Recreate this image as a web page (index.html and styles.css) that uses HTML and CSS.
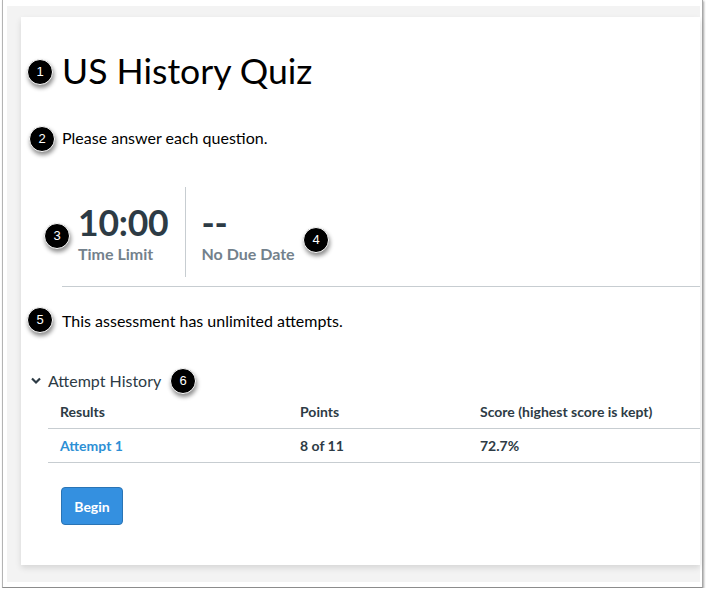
FILE: index.html
```html
<!DOCTYPE html>
<html>
<head>
<meta charset="utf-8">
<link rel="stylesheet" href="styles.css">
</head>
<body>
<div class="frame">
  <div class="page">
    <div class="card">
      <h1 class="title">US History Quiz</h1>
      <p class="desc">Please answer each question.</p>
      <div class="stats">
        <div class="stat first">
          <div class="stat-value">10:00</div>
          <div class="stat-label">Time Limit</div>
        </div>
        <div class="stat second">
          <div class="stat-value dash">--</div>
          <div class="stat-label">No Due Date</div>
        </div>
      </div>
      <p class="attempts">This assessment has unlimited attempts.</p>
      <div class="history">
        <div class="history-toggle">
          <svg class="chev" width="10" height="8" viewBox="0 0 10 8"><path d="M1 1.5 L5 5.5 L9 1.5" fill="none" stroke="#2d3b45" stroke-width="2.2"/></svg>
          <span>Attempt History</span>
        </div>
        <div class="table">
          <div class="row head">
            <div class="c1">Results</div>
            <div class="c2">Points</div>
            <div class="c3">Score (highest score is kept)</div>
          </div>
          <div class="row">
            <div class="c1"><a class="link">Attempt 1</a></div>
            <div class="c2">8 of 11</div>
            <div class="c3">72.7%</div>
          </div>
        </div>
      </div>
      <button class="begin">Begin</button>

      <span class="badge b1">1</span>
      <span class="badge b2">2</span>
      <span class="badge b3">3</span>
      <span class="badge b4">4</span>
      <span class="badge b5">5</span>
      <span class="badge b6">6</span>
    </div>
  </div>
</div>
</body>
</html>
```
FILE: styles.css
```css
* { box-sizing: border-box; }
html, body { margin: 0; padding: 0; background: #fff; }
body { font-family: Lato, "Open Sans", sans-serif; color: #000; }

.frame {
  margin-left: 2px;
  width: 701px;
  height: 588px;
  border-left: 1px solid #b4b4b4;
  border-right: 1px solid #a8a8a8;
  border-bottom: 1px solid #8c8c8c;
  box-shadow: 1px 1px 2px rgba(0,0,0,0.35);
  padding: 6px 2px 5px 4px;
  background: #fff;
}
.page {
  background: #f3f3f3;
  height: 100%;
  padding: 11px 0 0 14px;
}
.card {
  position: relative;
  background: #fff;
  height: 548px;
  box-shadow: 0 3px 6px rgba(0,0,0,0.12);
  padding: 0 0 0 41px;
}
.title {
  margin: 0;
  padding-top: 34px;
  font-size: 35.6px;
  font-weight: 400;
  line-height: 40px;
  color: #000;
}
.desc {
  margin: 37px 0 0 0;
  font-size: 16px;
  line-height: 20px;
}
.stats {
  display: flex;
  margin-top: 39px;
  height: 100px;
  border-bottom: 1px solid #c7cdd1;
}
.stat { display: flex; flex-direction: column; padding-top: 17px; }
.stat.first { padding-left: 16px; padding-right: 16px; border-right: 1px solid #c7cdd1; margin-bottom: 9px; }
.stat.second { padding-left: 16px; }
.stat-value {
  font-size: 35.5px;
  font-weight: 700;
  line-height: 38px;
  color: #2d3b45;
  letter-spacing: -0.2px;
}
.stat-label {
  font-size: 16px;
  line-height: 20px;
  color: #73818c;
  font-weight: 700;
  margin-top: 2px;
}
.attempts {
  margin: 24px 0 0 0;
  font-size: 16px;
  line-height: 20px;
}
.history { margin: 40px 0 0 -14px; }
.history-toggle {
  display: flex;
  align-items: center;
  gap: 7px;
  font-size: 16px;
  line-height: 20px;
  color: #2d3b45;
  margin-left: -17px;
}
.table { margin-top: 3px; }
.row {
  display: flex;
  border-bottom: 1px solid #c7cdd1;
  height: 34px;
  align-items: center;
  font-size: 14px;
  font-weight: 700;
  color: #2d3b45;
}
.row.head { height: 35px; }
.c1 { width: 252px; padding-left: 12px; }
.c2 { width: 180px; }
.c3 { flex: 1; }
.link { color: #2d8fd5; }
.begin {
  margin: 24px 0 0 -1px;
  width: 62px;
  height: 38px;
  background: #3490e0;
  border: 1px solid #2a74b5;
  border-radius: 4px;
  color: #fff;
  font-family: Lato, sans-serif;
  font-weight: 700;
  font-size: 14px;
  padding: 0;
}
.badge {
  position: absolute;
  width: 26px;
  height: 26px;
  border-radius: 50%;
  background: #000;
  color: #fff;
  font-family: "Liberation Sans", Arial, sans-serif;
  font-size: 13px;
  line-height: 24px;
  text-align: center;
  box-shadow: 1px 3px 4px rgba(0,0,0,0.45);
  border: 1px solid #fff;
}
.b1 { left: 6px; top: 42px; }
.b2 { left: 8px; top: 109px; }
.b3 { left: 23px; top: 206px; }
.b4 { left: 282px; top: 210px; }
.b5 { left: 6px; top: 290px; }
.b6 { left: 149px; top: 351px; }
```
